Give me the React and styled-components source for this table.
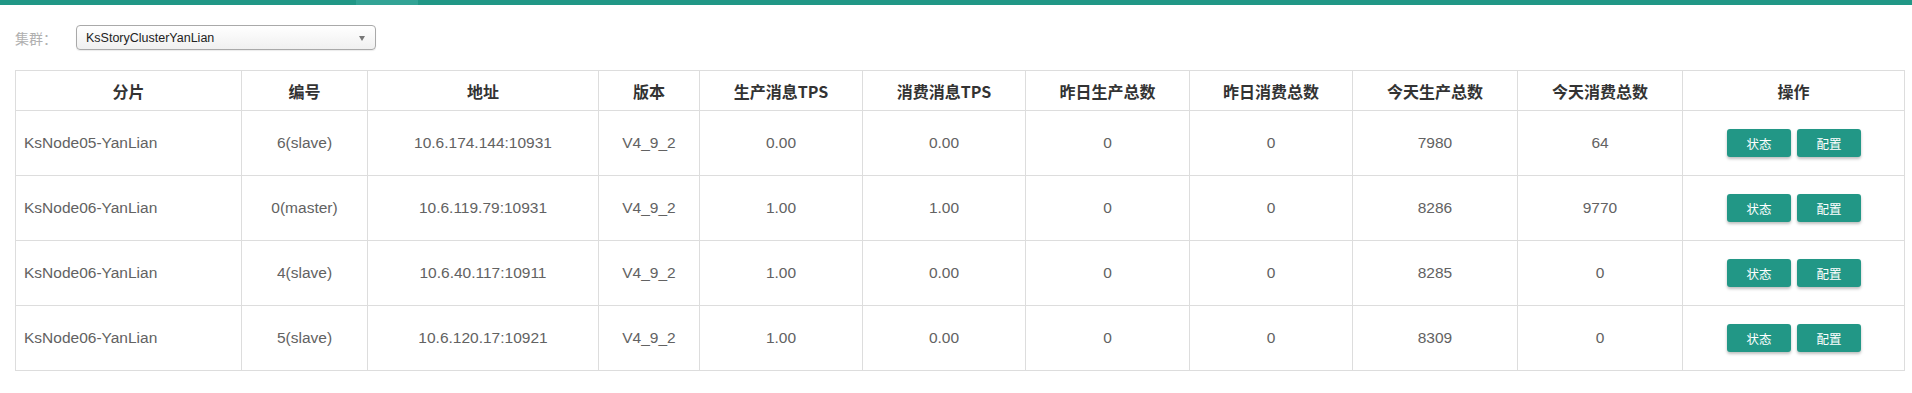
import React from "react";
import styled, { createGlobalStyle } from "styled-components";

const Global = createGlobalStyle`
  html, body { margin: 0; padding: 0; background: #fff; }
  body { font-family: "Liberation Sans", "Noto Sans CJK SC", sans-serif; }
`;

const TopBar = styled.div`
  display: flex;
  height: 5px;
  background: #219786;
`;
const TopSegment = styled.div`
  width: ${(p) => p.w}px;
  flex: ${(p) => (p.w ? "none" : 1)};
  background: ${(p) => (p.light ? "#32a395" : "#219786")};
`;

const Page = styled.div`
  padding: 20px 8px 0 15px;
`;

const FilterRow = styled.div`
  display: flex;
  align-items: center;
  height: 25px;
`;

const Label = styled.span`
  width: 61px;
  font-family: "Noto Sans CJK SC", sans-serif;
  font-size: 14px;
  color: #b0b0b0;
`;

const Select = styled.div`
  position: relative;
  box-sizing: border-box;
  width: 300px;
  height: 25px;
  border: 1px solid #a9a9a9;
  border-radius: 4px;
  background: linear-gradient(#ffffff, #f0f0f0);
  box-shadow: 0 1px 1px rgba(0, 0, 0, 0.08);
  display: flex;
  align-items: center;
  padding-left: 9px;
  font-family: "Liberation Sans", sans-serif;
  font-size: 12.5px;
  color: #222;
`;

const Arrow = styled.span`
  position: absolute;
  right: 10px;
  top: 10px;
  width: 0;
  height: 0;
  border-left: 3.5px solid transparent;
  border-right: 3.5px solid transparent;
  border-top: 5px solid #777;
`;

const Table = styled.table`
  margin-top: 20px;
  width: 1889px;
  border-collapse: collapse;
  table-layout: fixed;
`;

const Th = styled.th`
  height: 39px;
  border: 1px solid #dddddd;
  padding: 0;
  font-family: "Noto Sans CJK SC", sans-serif;
  font-weight: 700;
  font-size: 16px;
  color: #333;
  text-align: center;
`;

const Td = styled.td`
  height: 64px;
  border: 1px solid #dddddd;
  padding: 0 ${(p) => (p.left ? "8px" : "0")};
  font-family: "Liberation Sans", "Noto Sans CJK SC", sans-serif;
  font-size: 15.5px;
  color: #626262;
  text-align: ${(p) => (p.left ? "left" : "center")};
`;

const Actions = styled.div`
  display: flex;
  justify-content: center;
  gap: 6px;
  padding-left: 1px;
`;

const Button = styled.button`
  width: 64px;
  height: 28px;
  border: none;
  border-radius: 3px;
  background: #229786;
  color: #fff;
  font-family: "Noto Sans CJK SC", sans-serif;
  font-size: 12.5px;
  box-shadow: 0 2px 3px rgba(0, 0, 0, 0.25);
  padding: 0;
  cursor: pointer;
`;

const widths = [226, 126, 231, 101, 163, 163, 164, 163, 165, 165, 222];
const headers = ["分片", "编号", "地址", "版本", "生产消息TPS", "消费消息TPS", "昨日生产总数", "昨日消费总数", "今天生产总数", "今天消费总数", "操作"];

const rows = [
  ["KsNode05-YanLian", "6(slave)", "10.6.174.144:10931", "V4_9_2", "0.00", "0.00", "0", "0", "7980", "64"],
  ["KsNode06-YanLian", "0(master)", "10.6.119.79:10931", "V4_9_2", "1.00", "1.00", "0", "0", "8286", "9770"],
  ["KsNode06-YanLian", "4(slave)", "10.6.40.117:10911", "V4_9_2", "1.00", "0.00", "0", "0", "8285", "0"],
  ["KsNode06-YanLian", "5(slave)", "10.6.120.17:10921", "V4_9_2", "1.00", "0.00", "0", "0", "8309", "0"],
];

export default function App() {
  return (
    <>
      <Global />
      <TopBar>
        <TopSegment w={356} />
        <TopSegment w={62} light />
        <TopSegment />
      </TopBar>
      <Page>
        <FilterRow>
          <Label>集群：</Label>
          <Select>
            KsStoryClusterYanLian
            <Arrow />
          </Select>
        </FilterRow>
        <Table>
          <colgroup>
            {widths.map((w, i) => (
              <col key={i} style={{ width: w }} />
            ))}
          </colgroup>
          <thead>
            <tr>
              {headers.map((h) => (
                <Th key={h}>{h}</Th>
              ))}
            </tr>
          </thead>
          <tbody>
            {rows.map((r, i) => (
              <tr key={i}>
                {r.map((c, j) => (
                  <Td key={j} left={j === 0}>
                    {c}
                  </Td>
                ))}
                <Td>
                  <Actions>
                    <Button>状态</Button>
                    <Button>配置</Button>
                  </Actions>
                </Td>
              </tr>
            ))}
          </tbody>
        </Table>
      </Page>
    </>
  );
}
